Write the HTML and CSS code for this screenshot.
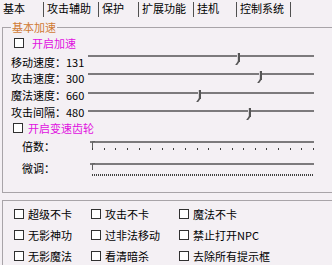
FILE: index.html
```html
<!DOCTYPE html>
<html lang="zh-CN">
<head>
    <meta charset="UTF-8">
    <title>基本</title>
    <link rel="stylesheet" href="styles.css">
</head>
<body>
    <div class="tabs">
        <div class="tab active">基本</div>
        <div class="tab">攻击辅助</div>
        <div class="tab">保护</div>
        <div class="tab">扩展功能</div>
        <div class="tab">挂机</div>
        <div class="tab">控制系统</div>
    </div>

    <fieldset class="group speed">
        <legend>基本加速</legend>
        <label class="check toggle speed-toggle"><span class="box"></span>开启加速</label>

        <div class="speed-rows">
            <div class="speed-labels">
                <div class="speed-label">移动速度：131</div>
                <div class="speed-label">攻击速度：300</div>
                <div class="speed-label">魔法速度：660</div>
                <div class="speed-label">攻击间隔：480</div>
            </div>
            <div class="speed-tracks">
                <div class="track-row"><div class="track"><span class="thumb" style="left:150px"></span></div></div>
                <div class="track-row"><div class="track"><span class="thumb" style="left:172px"></span></div></div>
                <div class="track-row"><div class="track"><span class="thumb" style="left:111px"></span></div></div>
                <div class="track-row"><div class="track"><span class="thumb" style="left:161px"></span></div></div>
            </div>
        </div>

        <label class="check toggle gear-toggle"><span class="box"></span>开启变速齿轮</label>

        <div class="gear-row">
            <span class="gear-label">倍数：</span>
            <div class="gear-slider">
                <div class="track"><span class="gear-thumb"></span></div>
                <div class="ticks sparse">
                    <i></i><i></i><i></i><i></i><i></i><i></i><i></i><i></i><i></i><i></i>
                    <i></i><i></i><i></i><i></i><i></i><i></i><i></i><i></i><i></i><i></i>
                </div>
            </div>
        </div>
        <div class="gear-row">
            <span class="gear-label">微调：</span>
            <div class="gear-slider">
                <div class="track"><span class="gear-thumb"></span></div>
                <div class="ticks dense"></div>
            </div>
        </div>
    </fieldset>

    <fieldset class="group options">
        <div class="option-grid">
            <label class="check"><span class="box"></span>超级不卡</label>
            <label class="check"><span class="box"></span>攻击不卡</label>
            <label class="check"><span class="box"></span>魔法不卡</label>
            <label class="check"><span class="box"></span>无影神功</label>
            <label class="check"><span class="box"></span>过非法移动</label>
            <label class="check"><span class="box"></span>禁止打开NPC</label>
            <label class="check"><span class="box"></span>无影魔法</label>
            <label class="check"><span class="box"></span>看清暗杀</label>
            <label class="check"><span class="box"></span>去除所有提示框</label>
        </div>
    </fieldset>
</body>
</html>
```

FILE: styles.css
```css
* {
    box-sizing: border-box;
}

body {
    margin: 0;
    width: 332px;
    height: 265px;
    overflow: hidden;
    background: #f4f0f4;
    color: #000;
    font-family: "Noto Sans CJK SC", "Noto Sans", sans-serif;
    font-size: 11px;
}

/* タブ */
.tabs {
    display: flex;
    height: 18px;
}

.tab {
    height: 15px;
    margin-top: 2px;
    padding-left: 3px;
    line-height: 13px;
    white-space: nowrap;
    border-right: 1px solid #505050;
}

.tab:nth-child(1) { width: 44px; }
.tab:nth-child(2) { width: 55px; }
.tab:nth-child(3) { width: 40px; }
.tab:nth-child(4) { width: 55px; }
.tab:nth-child(5) { width: 43px; }
.tab:nth-child(6) { width: 54px; }

/* グループ枠（右端は画面外） */
.group {
    margin: 0 0 0 2px;
    padding: 0;
    min-width: 0;
    border: 1px solid #a8a4a8;
    border-right: none;
}

.group legend {
    margin-left: 8px;
    padding: 0 1px;
    line-height: 12px;
    color: #d07a34;
}

.speed {
    margin-top: 3px;
    padding-bottom: 13px;
}

.options {
    margin-top: 7px;
    padding: 2px 0 0 11px;
    border-bottom: none;
}

/* チェックボックス */
.check {
    display: flex;
    align-items: center;
    gap: 4px;
    white-space: nowrap;
}

.box {
    width: 10px;
    height: 10px;
    border: 1px solid #303030;
    background: #fff;
    flex: none;
}

.toggle {
    color: #e010e0;
}

.speed-toggle {
    height: 19px;
    padding-left: 11px;
    gap: 8px;
}

.gear-toggle {
    height: 14px;
    padding-left: 10px;
    gap: 5px;
}

/* スライダー */
.speed-rows {
    display: flex;
    height: 69px;
}

.speed-labels {
    width: 85px;
    padding: 1.5px 0 0 8px;
}

.speed-label {
    height: 16.7px;
    line-height: 16.7px;
    white-space: nowrap;
}

.speed-tracks {
    width: 226px;
}

.track-row {
    height: 18.3px;
    padding-top: 3px;
}

.track {
    position: relative;
    height: 2px;
    background: #7c7a7c;
}

.thumb {
    position: absolute;
    top: -2px;
    width: 2px;
    height: 9px;
    background: #555;
    box-shadow: -1px 0 0 #d8d4d8;
}

.thumb::after {
    content: "";
    position: absolute;
    left: 0;
    top: 8px;
    width: 2px;
    height: 4px;
    background: #555;
    transform: skewX(-35deg);
    transform-origin: top;
}

.gear-row {
    display: flex;
    height: 22px;
}

.gear-label {
    width: 87px;
    padding-left: 19px;
    line-height: 22px;
}

.gear-slider {
    width: 224px;
    padding-top: 6px;
}

.gear-thumb {
    position: absolute;
    left: 2px;
    top: 0;
    width: 3px;
    height: 7px;
    border-left: 1px solid #606060;
    border-top: 1px solid #606060;
    border-top-left-radius: 2px;
}

.ticks {
    height: 2px;
    margin: 5px 0 0 2px;
}

.sparse {
    display: flex;
    justify-content: space-between;
}

.sparse i {
    width: 1px;
    height: 2px;
    background: #404040;
}

.dense {
    margin-top: 9px;
    background: repeating-linear-gradient(90deg, #404040 0 1px, transparent 1px 2px);
}

/* オプション */
.option-grid {
    display: grid;
    grid-template-columns: 77px 88px auto;
    grid-auto-rows: 21px;
}
```
